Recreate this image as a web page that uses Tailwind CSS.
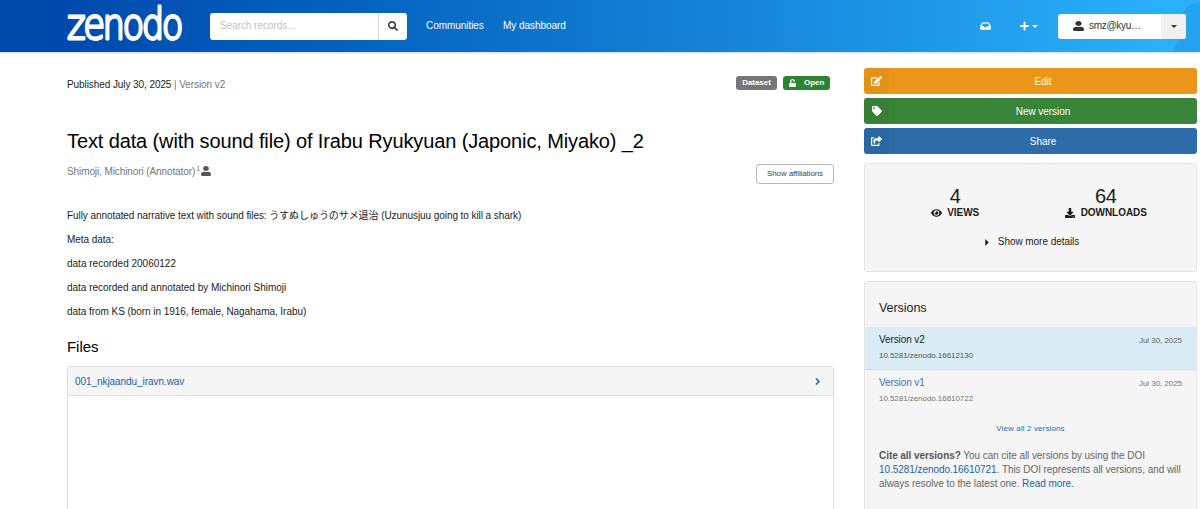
<!DOCTYPE html>
<html lang="en">
  <head>
    <meta charset="UTF-8" />
    <meta name="viewport" content="width=device-width, initial-scale=1.0" />
    <title>Text data (with sound file) of Irabu Ryukyuan - Zenodo</title>
    <script src="https://cdn.jsdelivr.net/npm/@tailwindcss/browser@4"></script>
  </head>
  <body
    class="h-[509px] overflow-hidden bg-white font-['Liberation_Sans','Noto_Sans_CJK_JP',sans-serif] text-[10px] leading-[14px] tracking-[-0.05px] text-[#1b1c1d]"
  >
    <!-- Header -->
    <header
      class="relative flex h-[52px] items-center bg-linear-to-r from-[#0049ad] from-5% via-[#1683d8] via-60% to-[#2ab0f9] to-97% pl-[66px] pr-[14px] text-white shadow-[0_1px_2px_rgba(34,36,38,0.2)]"
    >
      <svg class="absolute right-0 top-0 h-[52px] w-7" viewBox="0 0 28 52">
        <path d="M28 2C16 4 9 11 8 22C8 31 13 36 7 41C3 45 2 48 1 52H28Z" fill="#24a2ee" />
      </svg>

      <a href="#" aria-label="Zenodo">
        <svg class="block h-[52px] w-[116px] overflow-visible" viewBox="0 0 116 52">
          <text
            x="1"
            y="39"
            textLength="114"
            lengthAdjust="spacingAndGlyphs"
            font-family="DejaVu Sans"
            font-weight="200"
            font-size="43"
            letter-spacing="-3"
            fill="#fff"
            stroke="#fff"
            stroke-width="2.8"
            stroke-linejoin="round"
          >zenodo</text>
        </svg>
      </a>

      <form class="ml-7 flex h-[27px] w-[197px] overflow-hidden rounded-[3px] bg-white">
        <input
          type="text"
          placeholder="Search records..."
          class="w-[168px] pl-[10px] pb-px placeholder:text-[#bfbfbf] focus:outline-none"
        />
        <button
          type="button"
          aria-label="Search"
          class="flex flex-1 items-center justify-center border-l border-[#dededf] text-[#333]"
        >
          <svg class="h-[10px] w-[10px]" viewBox="0 0 512 512" fill="currentColor">
            <path d="M505 442.7L405.3 343c-4.5-4.5-10.6-7-17-7H372c27.6-35.3 44-79.7 44-128C416 93.1 322.9 0 208 0S0 93.1 0 208s93.1 208 208 208c48.3 0 92.7-16.4 128-44v16.3c0 6.4 2.5 12.5 7 17l99.7 99.7c9.4 9.4 24.6 9.4 33.9 0l28.3-28.3c9.4-9.4 9.4-24.6.1-34zM208 336c-70.7 0-128-57.2-128-128 0-70.7 57.2-128 128-128 70.7 0 128 57.2 128 128 0 70.7-57.2 128-128 128z" />
          </svg>
        </button>
      </form>

      <nav class="ml-[19px] flex gap-5 whitespace-nowrap">
        <a href="#" class="w-[57px]">Communities</a>
        <a href="#">My dashboard</a>
      </nav>

      <div class="relative ml-auto flex items-center">
        <svg class="h-[10px] w-[11px]" viewBox="0 0 576 512" fill="currentColor">
          <path d="M567.938 243.908L462.25 85.374A48.003 48.003 0 0 0 422.311 64H153.689a48 48 0 0 0-39.938 21.374L8.062 243.908A47.994 47.994 0 0 0 0 270.533V400c0 26.51 21.49 48 48 48h480c26.51 0 48-21.49 48-48V270.533a47.994 47.994 0 0 0-8.062-26.625zM162.252 128h251.497l85.333 128H376l-32 64H232l-32-64H76.918l85.334-128z" />
        </svg>
        <svg class="ml-[29px] h-[10px] w-[9px]" viewBox="0 0 448 512" fill="currentColor">
          <path d="M416 208H272V64c0-17.67-14.33-32-32-32h-32c-17.67 0-32 14.33-32 32v144H32c-17.67 0-32 14.33-32 32v32c0 17.67 14.33 32 32 32h144v144c0 17.67 14.33 32 32 32h32c17.67 0 32-14.33 32-32V304h144c17.67 0 32-14.33 32-32v-32c0-17.67-14.33-32-32-32z" />
        </svg>
        <svg class="ml-[3px] h-[3px] w-[6px]" viewBox="0 0 6 3" fill="currentColor">
          <path d="M0 0h6L3 3z" />
        </svg>
        <div class="ml-5 flex h-[25px] w-32 overflow-hidden rounded-[3px] bg-white text-[#333]">
          <button type="button" class="flex w-[103px] items-center pl-[15px]">
            <svg class="h-[10px] w-[11px]" viewBox="0 0 448 512" preserveAspectRatio="none" fill="currentColor">
              <path d="M224 256c70.7 0 128-57.3 128-128S294.7 0 224 0 96 57.3 96 128s57.3 128 128 128zm89.6 32h-16.7c-22.2 10.2-46.9 16-72.9 16s-50.6-5.8-72.9-16h-16.7C60.2 288 0 348.2 0 422.4V464c0 26.5 21.5 48 48 48h352c26.5 0 48-21.5 48-48v-41.6c0-74.2-60.2-134.4-134.4-134.4z" />
            </svg>
            <span class="ml-[5px] tracking-[-0.3px]">smz@kyu…</span>
          </button>
          <button type="button" aria-label="Menu" class="flex flex-1 items-center justify-center bg-[#f0f0f0]">
            <svg class="h-[3px] w-[6px]" viewBox="0 0 6 3" fill="currentColor">
              <path d="M0 0h6L3 3z" />
            </svg>
          </button>
        </div>
      </div>
    </header>

    <div class="flex gap-[30px] pl-[67px] pr-[3px]">
      <!-- Record -->
      <main class="w-[767px] shrink-0 pt-6">
        <div class="flex h-[14px] items-center">
          <p class="whitespace-nowrap pt-[3px] tracking-[-0.08px]">Published July 30, 2025 <span class="text-[#767676]">| Version v2</span></p>
          <span
            class="ml-auto flex h-[14px] w-[41px] items-center justify-center rounded-[3px] bg-[#767676] text-[8px] font-bold text-white"
            >Dataset</span
          >
          <span
            class="ml-[6px] mr-1 flex h-[14px] w-[47px] items-center rounded-[3px] bg-[#2b8530] pl-[6px] text-[8px] font-bold text-white"
          >
            <svg class="mr-2 h-2 w-[7px]" viewBox="0 0 448 512" fill="currentColor">
              <path d="M400 256H152V152.9c0-39.6 31.7-72.5 71.3-72.9 40-.4 72.7 32.1 72.7 72v16c0 13.3 10.7 24 24 24h32c13.3 0 24-10.7 24-24v-16C376 68 307.5-.3 223.5 0 139.5.3 72 69.5 72 153.5V256H48c-26.5 0-48 21.5-48 48v160c0 26.5 21.5 48 48 48h352c26.5 0 48-21.5 48-48V304c0-26.5-21.5-48-48-48z" />
            </svg>
            Open
          </span>
        </div>

        <h1 class="mt-[39px] whitespace-nowrap text-[20px] leading-6 tracking-[-0.12px] text-black">
          Text data (with sound file) of Irabu Ryukyuan (Japonic, Miyako) _2
        </h1>

        <div class="mt-[11px] flex h-5 items-center text-[#767676]">
          <span class="-mt-[5px] tracking-[-0.1px]">Shimoji, Michinori (Annotator)</span>
          <span class="-mt-[10px] ml-px text-[7px]">1</span>
          <svg class="-mt-[7px] ml-px h-[10px] w-[10px] text-[#555]" viewBox="0 0 448 512" preserveAspectRatio="none" fill="currentColor">
            <path d="M224 256c70.7 0 128-57.3 128-128S294.7 0 224 0 96 57.3 96 128s57.3 128 128 128zm89.6 32h-16.7c-22.2 10.2-46.9 16-72.9 16s-50.6-5.8-72.9-16h-16.7C60.2 288 0 348.2 0 422.4V464c0 26.5 21.5 48 48 48h352c26.5 0 48-21.5 48-48v-41.6c0-74.2-60.2-134.4-134.4-134.4z" />
          </svg>
          <button
            type="button"
            class="ml-auto h-5 w-[78px] rounded-[3px] border border-[#b5b5b5] text-[8px] leading-none tracking-[-0.1px] text-[#444]"
          >
            Show affiliations
          </button>
        </div>

        <div class="mt-[25px] space-y-[10px]">
          <p class="tracking-[-0.07px]">Fully annotated narrative text with sound files: うすぬしゅうのサメ退治 (Uzunusjuu going to kill a shark)</p>
          <p>Meta data:</p>
          <p class="tracking-normal">data recorded 20060122</p>
          <p class="tracking-[-0.02px]">data recorded and annotated by Michinori Shimoji</p>
          <p>data from KS (born in 1916, female, Nagahama, Irabu)</p>
        </div>

        <h2 class="mt-[19px] text-[15px] leading-[18px] text-black">Files</h2>
        <div class="mt-[10px] h-40 rounded-t-[3px] border border-[#dedede]">
          <div class="flex h-[29px] items-center justify-between border-b border-[#dedede] bg-[#f5f5f5] pl-[7px] pr-[13px] pt-px">
            <a href="#" class="tracking-[-0.06px] text-[#1b62a5]">001_nkjaandu_iravn.wav</a>
            <svg class="h-[7px] w-[5px]" viewBox="0 0 5 7" fill="none" stroke="#1b62a5" stroke-width="1.5">
              <path d="M1 .5l3 3-3 3" />
            </svg>
          </div>
        </div>
      </main>

      <!-- Sidebar -->
      <aside class="flex-1 pt-4">
        <div class="flex flex-col gap-1 text-white">
          <button type="button" class="flex h-[26px] items-center overflow-hidden rounded-[3px] bg-[#eb9619]">
            <span class="flex h-full w-[25px] items-center justify-center bg-black/3">
              <svg class="h-[10px] w-[11px]" viewBox="0 0 576 512" fill="currentColor">
                <path d="M402.6 83.2l90.2 90.2c3.8 3.8 3.8 10 0 13.8L274.4 405.6l-92.8 10.3c-12.4 1.4-22.9-9.1-21.5-21.5l10.3-92.8L388.8 83.2c3.8-3.8 10-3.8 13.8 0zm162-22.9l-48.8-48.8c-15.2-15.2-39.9-15.2-55.2 0l-35.4 35.4c-3.8 3.8-3.8 10 0 13.8l90.2 90.2c3.8 3.8 10 3.8 13.8 0l35.4-35.4c15.2-15.3 15.2-40 0-55.2zM384 346.2V448H64V128h229.8c3.2 0 6.2-1.3 8.5-3.5l40-40c7.6-7.6 2.2-20.5-8.5-20.5H48C21.5 64 0 85.5 0 112v352c0 26.5 21.5 48 48 48h352c26.5 0 48-21.5 48-48V306.2c0-10.7-12.9-16-20.5-8.5l-40 40c-2.2 2.3-3.5 5.3-3.5 8.5z" />
              </svg>
            </span>
            <span class="flex-1 pt-0.5">Edit</span>
          </button>
          <button type="button" class="flex h-[26px] items-center overflow-hidden rounded-[3px] bg-[#388439]">
            <span class="flex h-full w-[25px] items-center justify-center bg-black/3">
              <svg class="h-[10px] w-[10px]" viewBox="0 0 512 512" fill="currentColor">
                <path d="M0 252.118V48C0 21.49 21.49 0 48 0h204.118a48 48 0 0 1 33.941 14.059l211.882 211.882c18.745 18.745 18.745 49.137 0 67.882L293.823 497.941c-18.745 18.745-49.137 18.745-67.882 0L14.059 286.059A48 48 0 0 1 0 252.118zM112 64c-26.51 0-48 21.49-48 48s21.49 48 48 48 48-21.49 48-48-21.49-48-48-48z" />
              </svg>
            </span>
            <span class="flex-1 pt-0.5">New version</span>
          </button>
          <button type="button" class="flex h-[26px] items-center overflow-hidden rounded-[3px] bg-[#2d6ca8]">
            <span class="flex h-full w-[25px] items-center justify-center bg-black/3">
              <svg class="h-[10px] w-[11px]" viewBox="0 0 576 512" fill="currentColor">
                <path d="M568.482 177.448L424.479 313.433C409.3 327.768 384 317.14 384 295.985v-71.963c-144.575.97-205.566 35.113-164.775 171.353 4.483 14.973-12.846 26.567-25.006 17.33C155.252 383.105 120 326.488 120 269.339c0-143.937 117.599-172.5 264-173.312V24.012c0-21.174 25.317-31.768 40.479-17.448l144.003 135.988c10.02 9.463 10.028 25.425 0 34.896zM384 379.128V448H64V128h50.916a11.99 11.99 0 0 0 8.648-3.693c14.953-15.568 32.237-27.89 51.014-37.676C185.708 80.83 181.584 64 169.033 64H48C21.49 64 0 85.49 0 112v352c0 26.51 21.49 48 48 48h352c26.51 0 48-21.49 48-48v-88.806c0-8.288-8.197-14.066-16.011-11.302a71.83 71.83 0 0 1-34.189 3.377c-7.27-1.046-13.8 4.514-13.8 11.859z" />
              </svg>
            </span>
            <span class="flex-1 pt-0.5">Share</span>
          </button>
        </div>

        <section class="mt-[9px] h-[109px] rounded-[3px] border border-[#e4e4e4] bg-[#f5f5f5] pt-[22px]">
          <div class="grid grid-cols-2 px-[15px]">
            <div class="flex flex-col items-center">
              <span class="text-[20px] leading-5 tracking-[-0.3px]">4</span>
              <span class="flex items-center font-bold">
                <svg class="mr-[5px] h-[10px] w-[11px]" viewBox="0 0 576 512" fill="currentColor">
                  <path d="M572.52 241.4C518.29 135.59 410.93 64 288 64S57.68 135.64 3.48 241.41a32.35 32.35 0 0 0 0 29.19C57.71 376.41 165.07 448 288 448s230.32-71.64 284.52-177.41a32.35 32.35 0 0 0 0-29.19zM288 400a144 144 0 1 1 144-144 143.93 143.93 0 0 1-144 144zm0-240a95.31 95.31 0 0 0-25.31 3.79 47.85 47.85 0 0 1-66.9 66.9A95.78 95.78 0 1 0 288 160z" />
                </svg>
                VIEWS
              </span>
            </div>
            <div class="flex flex-col items-center">
              <span class="text-[20px] leading-5 tracking-[-0.3px]">64</span>
              <span class="flex items-center font-bold">
                <svg class="mr-[6px] h-[10px] w-[10px]" viewBox="0 0 512 512" fill="currentColor">
                  <path d="M216 0h80c13.3 0 24 10.7 24 24v168h87.7c17.8 0 26.7 21.5 14.1 34.1L269.7 378.3c-7.5 7.5-19.8 7.5-27.3 0L90.1 226.1c-12.6-12.6-3.7-34.1 14.1-34.1H192V24c0-13.3 10.7-24 24-24zm296 376v112c0 13.3-10.7 24-24 24H24c-13.3 0-24-10.7-24-24V376c0-13.3 10.7-24 24-24h146.7l49 49c20.1 20.1 52.5 20.1 72.6 0l49-49H488c13.3 0 24 10.7 24 24zm-124 88c0-11-9-20-20-20s-20 9-20 20 9 20 20 20 20-9 20-20zm64 0c0-11-9-20-20-20s-20 9-20 20 9 20 20 20 20-9 20-20z" />
                </svg>
                DOWNLOADS
              </span>
            </div>
          </div>
          <div class="mt-[15px] flex items-center justify-center pl-[3px]">
            <svg class="mr-[9px] h-[7px] w-1" viewBox="0 0 3 6" fill="currentColor">
              <path d="M0 0v6l3-3z" />
            </svg>
            Show more details
          </div>
        </section>

        <section class="mt-[9px] h-60 rounded-t-[3px] border border-[#e4e4e4] bg-[#f5f5f5]">
          <h2 class="px-[14px] pb-[11px] pt-[18px] text-[12.5px] leading-4">Versions</h2>
          <div class="h-[43px] border-b border-[#d5dde1] bg-[#daecf5] px-[14px] pt-[6px]">
            <div class="flex items-start justify-between">
              <span class="tracking-[-0.1px]">Version v2</span>
              <span class="pt-px text-[8px] text-[#666]">Jul 30, 2025</span>
            </div>
            <p class="mt-px text-[8px] tracking-[-0.05px] text-[#555]">10.5281/zenodo.16612130</p>
          </div>
          <div class="h-[43px] px-[14px] pt-[6px]">
            <div class="flex items-start justify-between">
              <a href="#" class="tracking-[-0.1px] text-[#3576b8]">Version v1</a>
              <span class="pt-px text-[8px] text-[#767676]">Jul 30, 2025</span>
            </div>
            <p class="mt-px text-[8px] tracking-[-0.05px] text-[#767676]">10.5281/zenodo.16610722</p>
          </div>
          <p class="mt-[9px] text-center text-[8px] tracking-[0.12px]"><a href="#" class="text-[#2a6cb0]">View all 2 versions</a></p>
          <p class="mt-[13px] whitespace-nowrap px-[14px] tracking-[-0.06px] text-[#666]">
            <b class="text-[#555]">Cite all versions?</b> You can cite all versions by using the DOI<br />
            <a href="#" class="text-[#1b62a5]">10.5281/zenodo.16610721</a>. This DOI represents all versions, and will<br />
            always resolve to the latest one. <a href="#" class="text-[#1b62a5]">Read more.</a>
          </p>
        </section>
      </aside>
    </div>
  </body>
</html>
